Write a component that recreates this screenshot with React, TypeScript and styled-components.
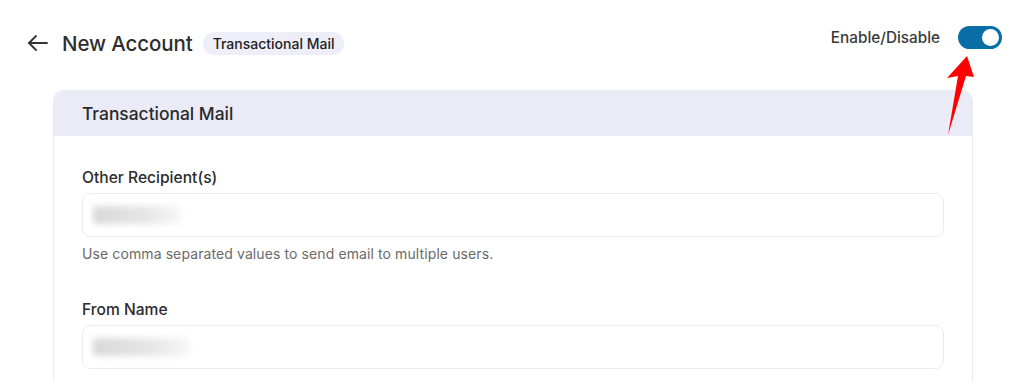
import styled, { createGlobalStyle } from "styled-components";

const GlobalStyle = createGlobalStyle`
    html, body {
        margin: 0;
        padding: 0;
        background: #fff;
        font-family: Inter, "Noto Sans", "Liberation Sans", sans-serif;
        color: #2c2c2c;
    }
`;

const Page = styled.div`
    width: 1024px;
    height: 382px;
    overflow: hidden;
    position: relative;
    box-sizing: border-box;
    padding: 25px 22px 0 26px;
`;

const TopBar = styled.div`
    display: flex;
    align-items: center;
    justify-content: space-between;
    height: 24px;
    margin-top: 6px;
`;

const TitleGroup = styled.div`
    display: flex;
    align-items: center;
    gap: 10px;
`;

const BackButton = styled.button`
    border: none;
    background: none;
    padding: 0;
    margin-right: 2px;
    display: flex;
    align-items: center;
    cursor: pointer;
    color: #333;
`;

const PageTitle = styled.h1`
    margin: 0;
    font-size: 20.5px;
    font-weight: 500;
    letter-spacing: -0.1px;
    color: #2e2e2e;
`;

const Badge = styled.span`
    background: #eeeef9;
    border-radius: 12px;
    padding: 3px 10px;
    font-size: 14px;
    font-weight: 500;
    color: #1f1f1f;
`;

const ToggleGroup = styled.div`
    display: flex;
    align-items: center;
    gap: 18px;
    margin-top: -12px;
`;

const ToggleLabel = styled.span`
    font-size: 15.3px;
    font-weight: 500;
    color: #3a3a3a;
`;

const Switch = styled.div<{ $on: boolean }>`
    width: 44px;
    height: 23px;
    border-radius: 12px;
    background: ${(p) => (p.$on ? "#0a6ea6" : "#ccc")};
    display: flex;
    align-items: center;
    justify-content: ${(p) => (p.$on ? "flex-end" : "flex-start")};
    padding: 0 3px;
    box-sizing: border-box;
`;

const Knob = styled.span`
    width: 17px;
    height: 17px;
    border-radius: 50%;
    background: #fff;
`;

const Pointer = styled.svg`
    position: absolute;
    left: 944px;
    top: 56px;
    overflow: visible;
`;

const Card = styled.section`
    margin: 35px 29px 0 27px;
    border: 1px solid #ebebf4;
    border-radius: 10px;
    overflow: hidden;
    background: #fff;
`;

const CardHeader = styled.div`
    background: #ebebf8;
    height: 45px;
    display: flex;
    align-items: center;
    padding: 0 28px;
`;

const CardTitle = styled.h2`
    margin: 0;
    font-size: 17.4px;
    font-weight: 500;
    color: #2a2a2a;
`;

const CardBody = styled.div`
    padding: 32px 28px 20px;
    display: flex;
    flex-direction: column;
    gap: 38px;
`;

const Field = styled.div`
    display: flex;
    flex-direction: column;
`;

const Label = styled.label`
    font-size: 15.6px;
    font-weight: 500;
    color: #2c2c2c;
    margin-bottom: 6px;
`;

const InputBox = styled.div`
    height: 44px;
    border: 1px solid #ececf4;
    border-radius: 8px;
    box-sizing: border-box;
    display: flex;
    align-items: center;
    padding: 0 10px;
`;

const Blurred = styled.span<{ $w: number }>`
    width: ${(p) => p.$w}px;
    height: 18px;
    background: linear-gradient(90deg, #d8d8d8, #e6e6e6 60%, #f6f6f6);
    filter: blur(3px);
    border-radius: 4px;
`;

const Help = styled.p`
    margin: 8px 0 0;
    font-size: 14px;
    color: #6a6a6a;
    letter-spacing: 0.1px;
`;

export default function App() {
    return (
        <>
            <GlobalStyle />
            <Page>
                <TopBar>
                    <TitleGroup>
                        <BackButton aria-label="Back">
                            <svg width="24" height="24" viewBox="0 0 24 24" fill="none" stroke="#333" strokeWidth="1.8" strokeLinecap="round" strokeLinejoin="round">
                                <path d="M21 12H3" />
                                <path d="M10 5l-7 7 7 7" />
                            </svg>
                        </BackButton>
                        <PageTitle>New Account</PageTitle>
                        <Badge>Transactional Mail</Badge>
                    </TitleGroup>
                    <ToggleGroup>
                        <ToggleLabel>Enable/Disable</ToggleLabel>
                        <Switch $on={true}>
                            <Knob />
                        </Switch>
                    </ToggleGroup>
                </TopBar>
                <Pointer width="30" height="80" viewBox="0 0 30 80">
                    <path d="M23 0 L30 21 L22 20 L4 79 L14 20 L3 22 Z" fill="#ff0000" />
                </Pointer>
                <Card>
                    <CardHeader>
                        <CardTitle>Transactional Mail</CardTitle>
                    </CardHeader>
                    <CardBody>
                        <Field>
                            <Label>Other Recipient(s)</Label>
                            <InputBox>
                                <Blurred $w={88} />
                            </InputBox>
                            <Help>Use comma separated values to send email to multiple users.</Help>
                        </Field>
                        <Field>
                            <Label>From Name</Label>
                            <InputBox>
                                <Blurred $w={96} />
                            </InputBox>
                        </Field>
                    </CardBody>
                </Card>
            </Page>
        </>
    );
}
